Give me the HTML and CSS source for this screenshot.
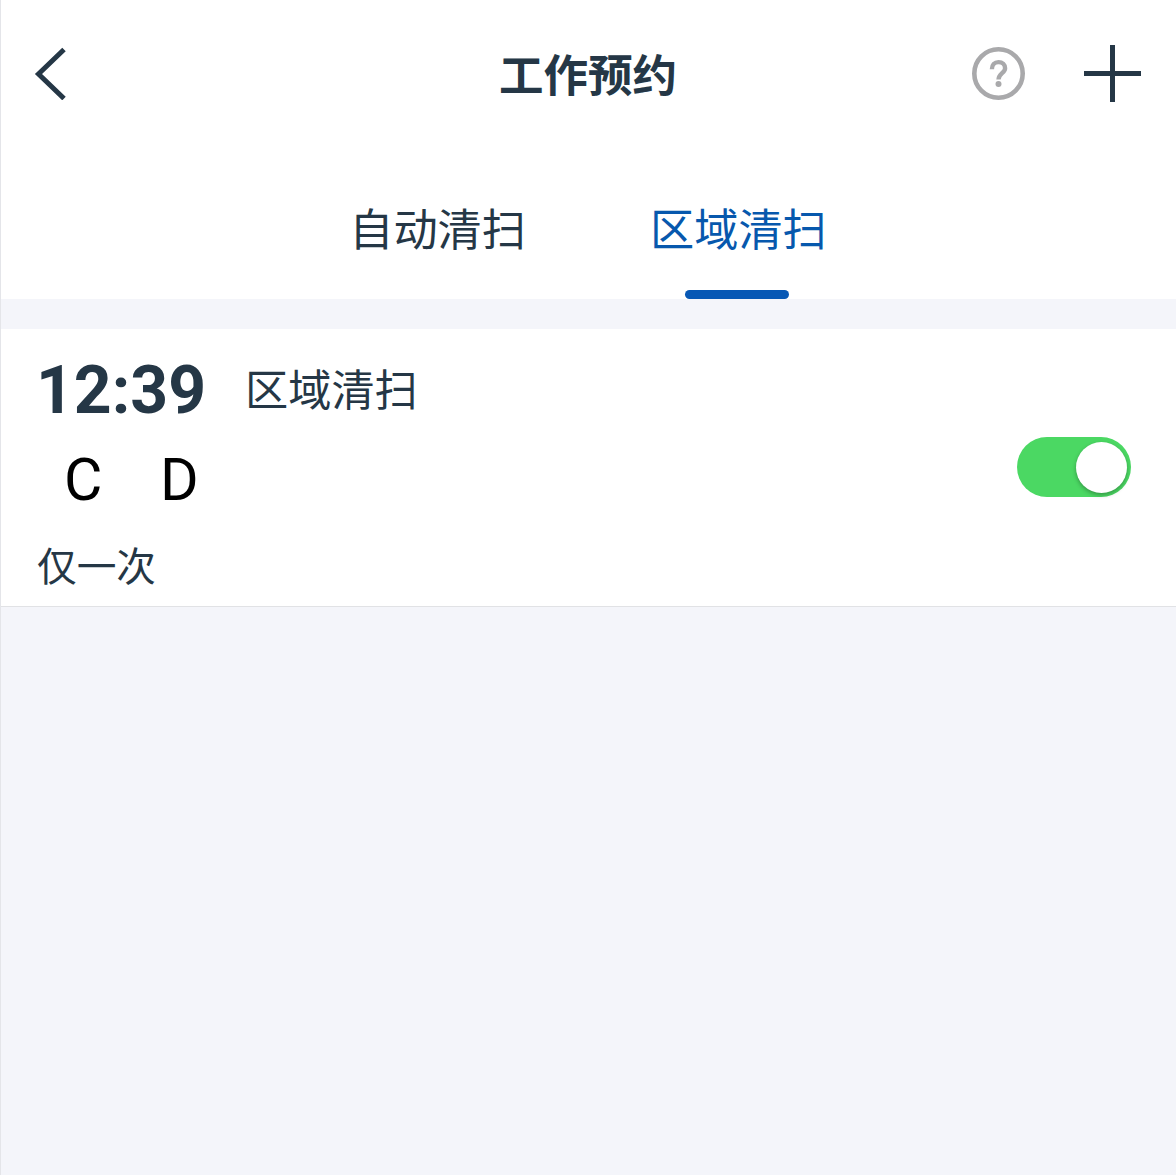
FILE: index.html
```html
<!DOCTYPE html>
<html lang="zh-CN">
<head>
<meta charset="utf-8">
<title>工作预约</title>
<link rel="stylesheet" href="styles.css">
</head>
<body>
<div class="app">
  <header class="header">
    <div class="side">
      <svg width="32" height="53" viewBox="0 0 32 53"><path d="M30 2.500 4.500 27 30 51.500" fill="none" stroke="#253746" stroke-width="5"/></svg>
    </div>
    <h1 class="title">工作预约</h1>
    <div class="side actions">
      <svg width="53" height="53" viewBox="0 0 53 53" fill="none" stroke="#a9a9ab"><circle cx="26.500" cy="26.500" r="24.200" stroke-width="4.600"/><path d="M19.900 22.300C19.900 17.800 22.500 15.100 26.500 15.100S33.100 17.600 33.100 21.200C33.100 26 26.500 26.500 26.500 32.500" stroke-width="4.400"/><circle cx="26.500" cy="37" r="3" fill="#a9a9ab" stroke="none"/></svg>
      <svg width="57" height="57" viewBox="0 0 57 57"><path d="M28.500 0v57M0 28.500h57" fill="none" stroke="#253746" stroke-width="5"/></svg>
    </div>
  </header>
  <nav class="tabs">
    <div class="tab">自动清扫</div>
    <div class="tab active">区域清扫</div>
  </nav>
  <main class="card">
    <div class="info">
      <div class="line"><span class="time">12:39</span><span class="mode">区域清扫</span></div>
      <div class="zones"><span>C</span><span>D</span></div>
      <div class="repeat">仅一次</div>
    </div>
    <div class="switch"><div class="knob"></div></div>
  </main>
</div>
</body>
</html>
```
FILE: styles.css
```css
* { box-sizing: border-box; }
body { margin: 0; background: #f4f5fa; color: #253746; font-family: Roboto, "Noto Sans CJK SC", sans-serif; }
.app { min-height: 1175px; border-left: 1px solid #e4e5e9; }
.header { height: 148px; padding: 0 35px 1px 33px; display: flex; align-items: center; background: #fff; }
.side { flex: 1; display: flex; align-items: center; }
.side svg { display: block; }
.actions { justify-content: flex-end; gap: 59px; }
.title { margin: 7px -1px 0 0; font-size: 44.500px; line-height: 60px; font-weight: 700; }
.tabs { height: 151px; padding-right: 1px; display: flex; justify-content: center; gap: 124px; background: #fff; }
.tab { height: 151px; padding-top: 53px; font-size: 44.200px; line-height: 60px; display: flex; flex-direction: column; align-items: center; }
.active { color: #0758ad; }
.active::after { content: ""; width: 104px; height: 9px; margin: auto 3px 0 0; border-radius: 4.500px; background: #0758b5; }
.card { height: 278px; margin-top: 30px; padding: 0 45px 0 35px; display: flex; justify-content: space-between; align-items: center; background: #fff; border-bottom: 1px solid #e1e2e5; }
.info { height: 277px; padding-top: 27px; }
.line { display: flex; align-items: center; height: 70px; }
.time { width: 209px; font-size: 66px; line-height: 70px; font-weight: 700; }
.mode { margin-top: 2px; font-size: 43.200px; line-height: 60px; }
.zones { display: flex; gap: 58px; margin-top: 11px; padding-left: 28px; height: 84px; align-items: center; font-size: 59px; color: #000; }
.zones span { width: 38px; }
.repeat { height: 60px; margin-top: 17px; padding-left: 1px; font-size: 39.700px; line-height: 60px; }
.switch { width: 114px; height: 60px; margin-bottom: 2px; padding: 5px 4px; border-radius: 30px; background: #4bd863; display: flex; justify-content: flex-end; }
.knob { width: 51px; height: 51px; border-radius: 50%; background: #fff; box-shadow: 0 2px 4px rgba(0,0,0,.3); }
```
